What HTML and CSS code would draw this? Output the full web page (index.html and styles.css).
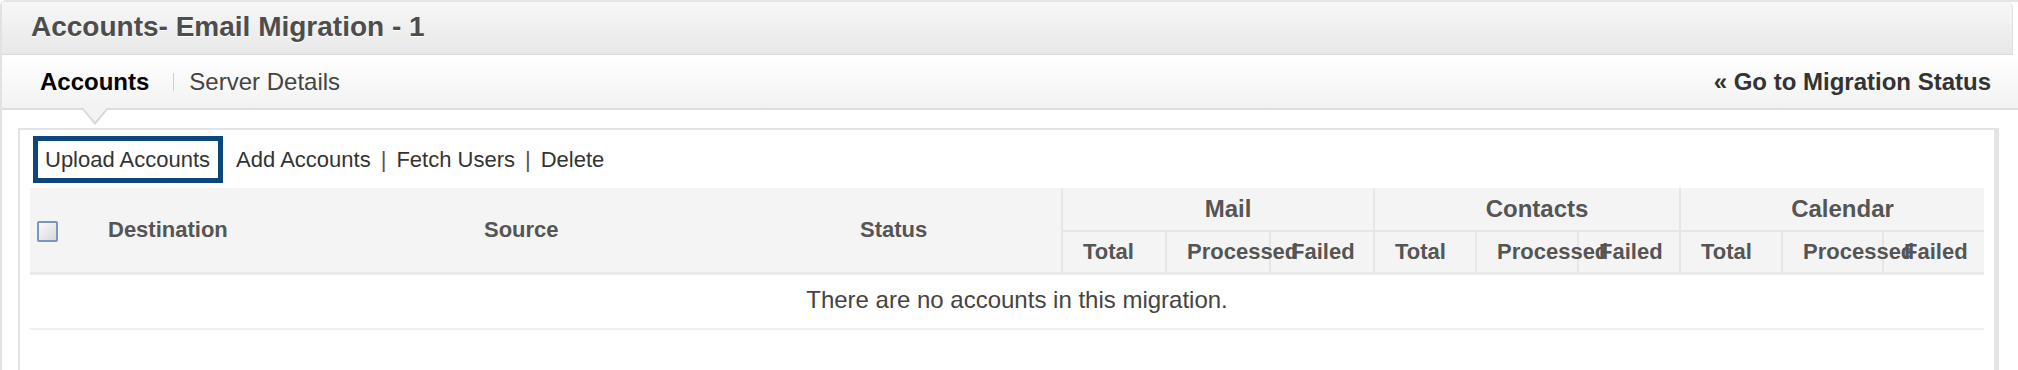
FILE: index.html
```html
<!DOCTYPE html>
<html lang="en">
<head>
    <meta charset="UTF-8">
    <title>Accounts- Email Migration - 1</title>
    <link rel="stylesheet" href="styles.css">
</head>
<body>
    <div class="page">
        <div class="title-bar">
            <h1>Accounts- Email Migration - 1</h1>
        </div>
        <div class="tab-bar">
            <ul class="tabs">
                <li class="tab active">Accounts</li>
                <li class="tab-sep"></li>
                <li class="tab">Server Details</li>
            </ul>
            <a class="back-link" href="#">&laquo; Go to Migration Status</a>
        </div>
        <div class="panel">
            <div class="toolbar">
                <a class="action focused" href="#">Upload Accounts</a>
                <a class="action" href="#">Add Accounts</a>
                <span class="sep">|</span>
                <a class="action" href="#">Fetch Users</a>
                <span class="sep">|</span>
                <a class="action" href="#">Delete</a>
            </div>
            <table class="accounts">
                <colgroup>
                    <col class="c-check">
                    <col class="c-main">
                    <col class="c-main">
                    <col class="c-status">
                    <col class="c-sub"><col class="c-sub"><col class="c-sub">
                    <col class="c-sub2"><col class="c-sub2"><col class="c-sub2">
                    <col class="c-sub2"><col class="c-sub3"><col class="c-sub2">
                </colgroup>
                <thead>
                    <tr class="group-row">
                        <th rowspan="2" class="check-cell"><span class="checkbox"></span></th>
                        <th rowspan="2">Destination</th>
                        <th rowspan="2">Source</th>
                        <th rowspan="2">Status</th>
                        <th colspan="3" class="group">Mail</th>
                        <th colspan="3" class="group">Contacts</th>
                        <th colspan="3" class="group">Calendar</th>
                    </tr>
                    <tr class="sub-row">
                        <th class="sub">Total</th>
                        <th class="sub">Processed</th>
                        <th class="sub">Failed</th>
                        <th class="sub">Total</th>
                        <th class="sub">Processed</th>
                        <th class="sub">Failed</th>
                        <th class="sub">Total</th>
                        <th class="sub">Processed</th>
                        <th class="sub">Failed</th>
                    </tr>
                </thead>
                <tbody>
                    <tr>
                        <td colspan="13" class="empty">There are no accounts in this migration.</td>
                    </tr>
                </tbody>
            </table>
        </div>
    </div>
</body>
</html>
```

FILE: styles.css
```css
body {
    margin: 0;
    font-family: "Liberation Sans", Arial, Helvetica, sans-serif;
    background: #fff;
}
.page {
    border-top: 2px solid #e4e4e4;
    border-left: 2px solid #e2e2e2;
    border-top-left-radius: 6px;
    height: 368px;
}
.title-bar {
    height: 52px;
    margin-right: 5px;
    border-bottom: 1px solid #d9d9d9;
    border-right: 1px solid #e0e0e0;
    border-top-right-radius: 6px;
    background: linear-gradient(#f7f7f7, #e8e8e8);
}
.title-bar h1 {
    margin: 0;
    padding-left: 29px;
    font-size: 28px;
    line-height: 50px;
    color: #4d4d4d;
    text-shadow: 0 1px 0 #fff;
}
.tab-bar {
    display: flex;
    justify-content: space-between;
    align-items: center;
    height: 53px;
    padding: 0 27px 0 38px;
    border-bottom: 2px solid #dedede;
    background: linear-gradient(#fff, #f2f2f2);
}
.tabs {
    display: flex;
    align-items: center;
    height: 100%;
    margin: 0;
    padding: 0;
    list-style: none;
}
.tab {
    position: relative;
    display: flex;
    align-items: center;
    height: 100%;
    font-size: 24px;
    color: #444;
}
.tab.active {
    font-weight: bold;
    color: #000;
}
.tab.active::before,
.tab.active::after {
    content: "";
    position: absolute;
    left: 50%;
    width: 0;
    height: 0;
    border-style: solid;
    border-color: transparent;
}
.tab.active::before {
    top: 53px;
    margin-left: -14px;
    border-width: 17px 14px 0 14px;
    border-top-color: #d6d6d6;
}
.tab.active::after {
    top: 53px;
    margin-left: -12px;
    border-width: 14px 12px 0 12px;
    border-top-color: #f3f3f3;
}
.tab-sep {
    width: 1px;
    height: 18px;
    margin: 0 15px 0 24px;
    background: #cfcfcf;
}
.back-link {
    font-size: 24px;
    font-weight: bold;
    color: #333;
    text-decoration: none;
}
.panel {
    margin: 18px 19px 0 16px;
    padding: 6px 10px 40px;
    border: 2px solid #e3e3e3;
    border-right-width: 5px;
    border-bottom: none;
}
.toolbar {
    display: flex;
    align-items: center;
    margin-left: 3px;
    font-size: 22px;
    line-height: 25px;
    color: #333;
}
.action {
    color: #333;
    text-decoration: none;
}
.action.focused {
    padding: 6px 8px 6px 7px;
    margin-right: 13px;
    border: 5px solid #0c477b;
}
.sep {
    margin: 0 10px;
    color: #555;
}
.accounts {
    width: 100%;
    margin-top: 5px;
    border-collapse: separate;
    border-spacing: 0;
    table-layout: fixed;
}
.c-check { width: 58px; }
.c-main { width: 376px; }
.c-status { width: 221px; }
.c-sub { width: 104px; }
.c-sub2 { width: 102px; }
.c-sub3 { width: 101px; }
.accounts th {
    padding: 0 0 0 20px;
    background: #f4f4f4;
    color: #555;
    font-size: 22px;
    font-weight: bold;
    text-align: left;
    white-space: nowrap;
}
.accounts thead tr:first-child th[rowspan] {
    border-bottom: 3px solid #eaeaea;
}
.accounts .check-cell {
    padding-left: 7px;
}
.checkbox {
    display: inline-block;
    width: 17px;
    height: 17px;
    vertical-align: middle;
    border: 2px solid #7c95bb;
    border-radius: 2px;
    background: linear-gradient(135deg, #fafafa, #d8d8d8);
}
.group-row th {
    height: 42px;
}
.accounts th.group {
    font-size: 24px;
    text-align: center;
    border-left: 2px solid #e6e6e6;
    border-bottom: 2px solid #e6e6e6;
}
.sub-row th {
    height: 40px;
    border-left: 2px solid #e6e6e6;
    border-bottom: 3px solid #eaeaea;
}
.empty {
    height: 49px;
    padding: 0 0 4px 20px;
    border-bottom: 2px solid #efefef;
    text-align: center;
    font-size: 24px;
    color: #444;
}
```
